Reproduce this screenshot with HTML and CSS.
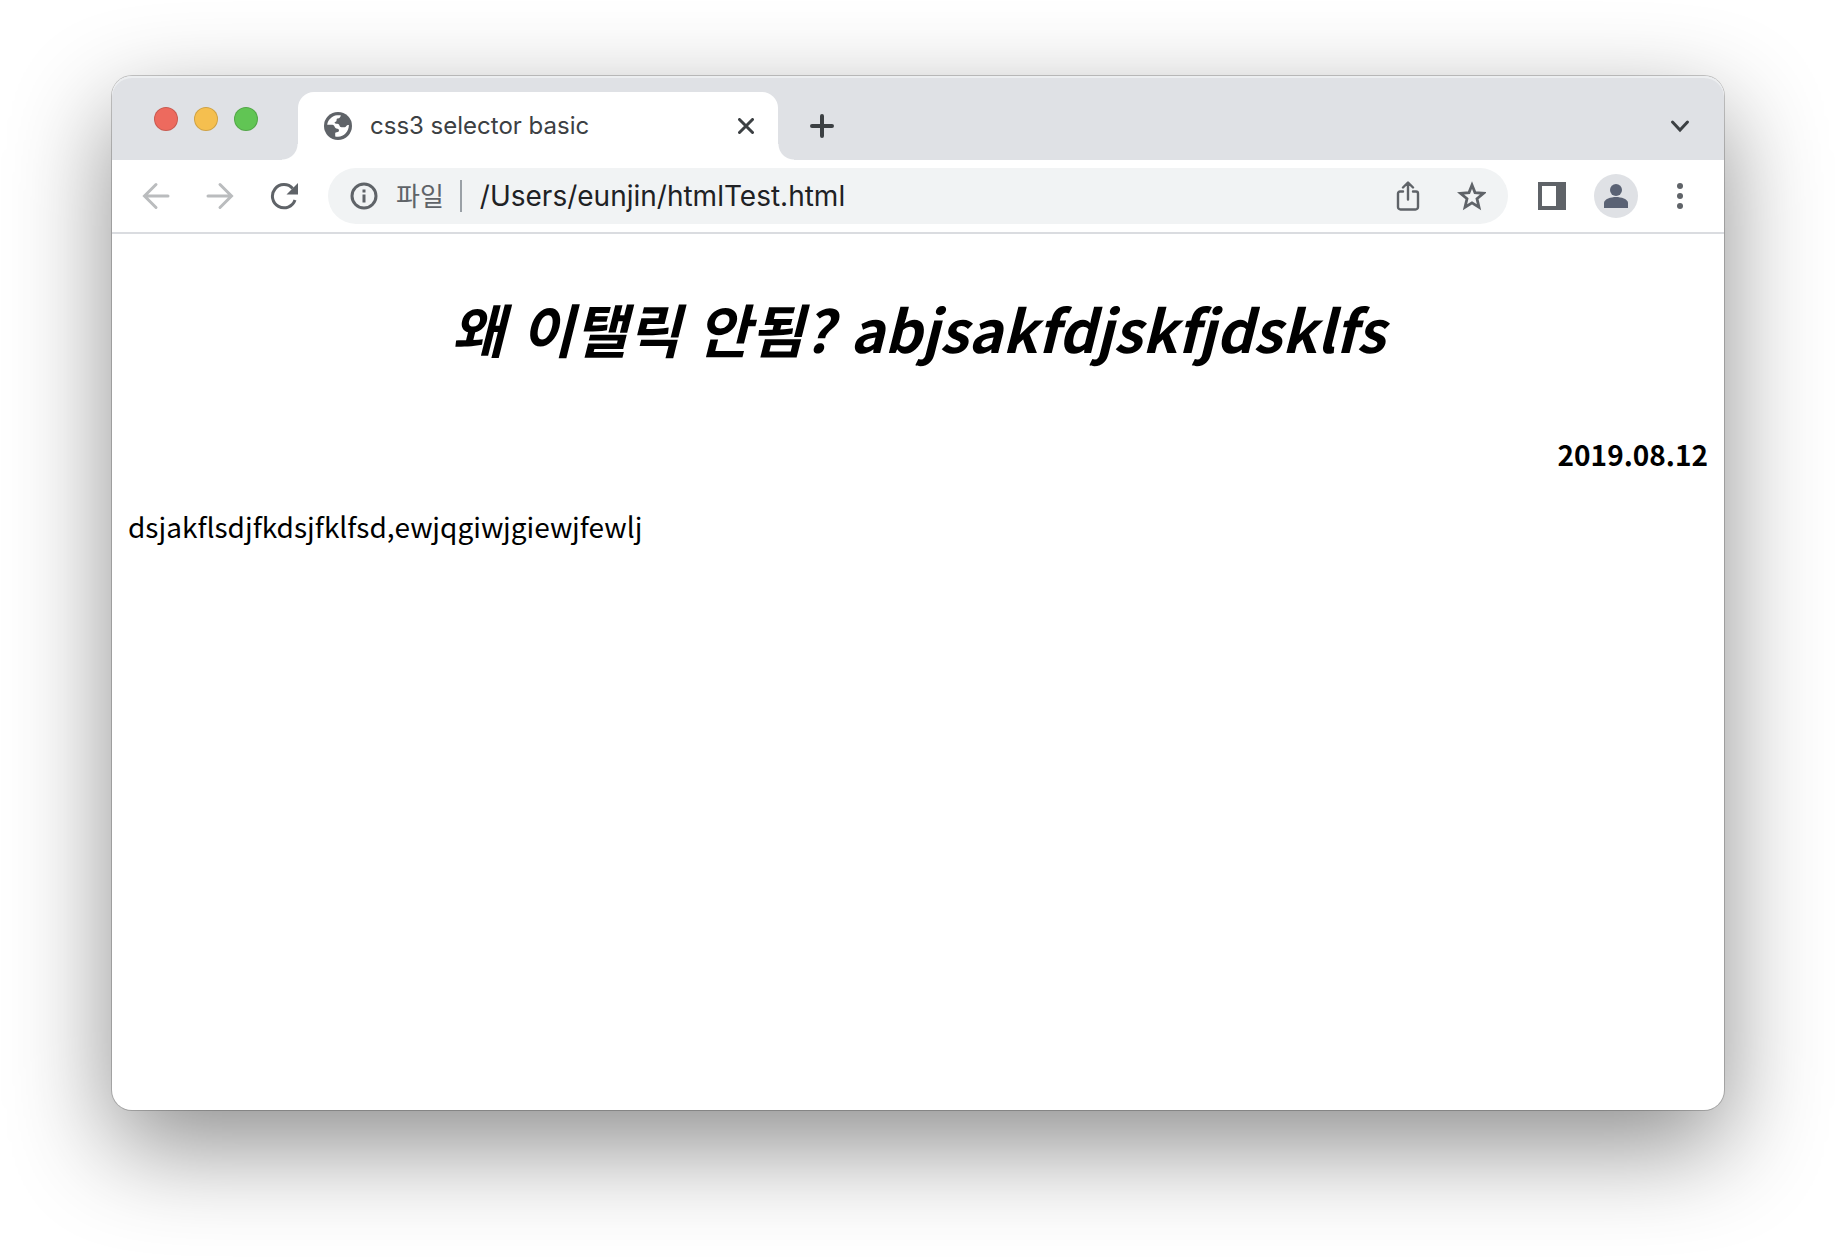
FILE: index.html
```html
<!DOCTYPE html>
<html lang="ko">
  <head>
    <meta charset="utf-8">
    <meta name="viewport" content="width=device-width, initial-scale=1">
    <title>css3 selector basic</title>
    <link rel="stylesheet" href="styles.css">
  </head>
  <body>
    <div class="window">

      <header class="tabstrip">
        <div class="lights">
          <button class="light light-close" aria-label="닫기"></button>
          <button class="light light-min" aria-label="최소화"></button>
          <button class="light light-max" aria-label="최대화"></button>
        </div>
        <div class="tab">
          <svg class="favicon" viewBox="0 0 28 28" width="28" height="28">
            <circle cx="14" cy="14" r="14" fill="#5f6368"/>
            <path fill="#fff" d="M3.200 12.800C3.800 8 8 3.800 13 3.300h3.800c-.2 1.700-1.200 3.200-3 3.300-.8 0-1.200.5-1.200 1.300 0 1.200-.6 1.800-1.600 2-.5.200-.4.900 0 1.300 1.100.8 3.200.2 4 1.300.6.8.6 2.300 1.700 2.600 1.700.5 4.500.2 5.300-.7.7-.8 1.500-1.300 2.900-1.300C24.900 19.500 20 24.800 14 24.800c-1 0-2-.1-2.800-.4v-3.300c.2-1.200 2.600-.4 3.500-1.600.8-1.200 0-2.600-1.300-2.700-1.700-.2-2.400-1-3-2.500-.5-1.200-1.700-1.500-3-1.500z"/>
          </svg>
          <span class="tab-title">css3 selector basic</span>
          <button class="icon-btn tab-close" aria-label="탭 닫기">
            <svg viewBox="0 0 16 16" width="16" height="16"><path class="line dark" d="M1.500 1.500l13 13M14.500 1.500l-13 13"/></svg>
          </button>
        </div>
        <button class="icon-btn new-tab" aria-label="새 탭">
          <svg viewBox="0 0 24 24" width="24" height="24"><path class="line dark thick" d="M12 2v20M2 12h20"/></svg>
        </button>
        <button class="icon-btn tab-search" aria-label="탭 검색">
          <svg viewBox="0 0 20 20" width="20" height="20"><path class="line dark" d="M2.500 6l7.500 8 7.500-8"/></svg>
        </button>
      </header>

      <nav class="toolbar">
        <button class="icon-btn" aria-label="뒤로">
          <svg viewBox="0 0 28 28" width="28" height="28"><path class="line faint" d="M26 14H3M14 2.500L2.500 14 14 25.500"/></svg>
        </button>
        <button class="icon-btn" aria-label="앞으로">
          <svg viewBox="0 0 28 28" width="28" height="28"><path class="line faint" d="M2 14h23M14 2.500L25.500 14 14 25.500"/></svg>
        </button>
        <button class="icon-btn" aria-label="새로고침">
          <svg viewBox="0 0 28 28" width="28" height="28">
            <path fill="none" stroke="#5f6368" stroke-width="3" d="M22.700 6.500A11.600 11.600 0 1 0 25 18"/>
            <path fill="#5f6368" d="M28 1v11.500H16.500z"/>
          </svg>
        </button>
        <div class="omnibox">
          <svg viewBox="0 0 28 28" width="28" height="28">
            <circle cx="14" cy="14" r="12" fill="none" stroke="#5f6368" stroke-width="3"/>
            <path fill="#5f6368" d="M12.500 7.500h3v3h-3zM12.500 12.500h3v8h-3z"/>
          </svg>
          <label class="scheme" for="url">파일</label>
          <input class="url" id="url" type="text" value="/Users/eunjin/htmlTest.html">
          <button class="icon-btn" aria-label="공유">
            <svg viewBox="0 0 28 30" width="28" height="30">
              <path fill="none" stroke="#5f6368" stroke-width="2.400" stroke-linecap="round" stroke-linejoin="round" d="M9 10.500H6a2 2 0 0 0-2 2V26a2.500 2.500 0 0 0 2.500 2.500h15A2.500 2.500 0 0 0 24 26V12.500a2 2 0 0 0-2-2h-3M14 18.500V2M9 6.500l5-5 5 5"/>
            </svg>
          </button>
          <button class="icon-btn" aria-label="북마크">
            <svg viewBox="0 0 30 30" width="30" height="30">
              <path fill="none" stroke="#5f6368" stroke-width="2.800" d="M16 4l3 7.600 8.500.700-6.500 5.500 2 8.400-7-4.400-7 4.400L11 17.800l-6.500-5.500L13 11.600z"/>
            </svg>
          </button>
        </div>
        <button class="icon-btn" aria-label="측면 패널">
          <svg viewBox="0 0 28 28" width="28" height="28"><path fill="#5f6368" fill-rule="evenodd" d="M0 0h28v28H0zM4 4v20h14V4z"/></svg>
        </button>
        <button class="icon-btn avatar" aria-label="프로필">
          <svg viewBox="0 0 24 24" width="24" height="24"><circle cx="12" cy="6" r="6" fill="#5a6274"/><path fill="#5a6274" d="M0 24v-5c0-4 7-6 12-6s12 2 12 6v5z"/></svg>
        </button>
        <button class="icon-btn" aria-label="메뉴">
          <svg viewBox="0 0 28 28" width="28" height="28" fill="#5f6368"><circle cx="14" cy="4" r="3"/><circle cx="14" cy="14" r="3"/><circle cx="14" cy="24" r="3"/></svg>
        </button>
      </nav>

      <main class="page">
        <h1 class="title">왜 이탤릭 안됨? abjsakfdjskfjdsklfs</h1>
        <p class="date">2019.08.12</p>
        <p class="text">dsjakflsdjfkdsjfklfsd,ewjqgiwjgiewjfewlj</p>
      </main>

    </div>
  </body>
</html>
```
FILE: styles.css
```css
* {
  box-sizing: border-box;
}

body {
  display: flex;
  min-height: 100vh;
  margin: 0;
  padding: 76px 112px 148px;
  background: #fff;
  font-family: "Noto Sans CJK KR", sans-serif;
}

.window {
  display: flex;
  flex: 1;
  flex-direction: column;
  min-width: 0;
  border-radius: 20px;
  background: #fff;
  box-shadow: 0 0 0 1px rgba(0, 0, 0, 0.2), 0 36px 100px rgba(0, 0, 0, 0.45);
}

/* tab strip */

.tabstrip {
  display: flex;
  align-items: center;
  height: 84px;
  padding: 16px 30px 0 42px;
  border-radius: 20px 20px 0 0;
  background: #dfe1e5;
  box-shadow: inset 0 2px 0 #eceef0;
}

.lights {
  display: flex;
  gap: 16px;
  margin: 0 40px 14px 0;
}

.light {
  width: 24px;
  height: 24px;
  padding: 0;
  border: 1px solid rgba(0, 0, 0, 0.15);
  border-radius: 50%;
}

.light-close {
  background: #ed6a5e;
}

.light-min {
  background: #f5bf4f;
}

.light-max {
  background: #61c554;
}

.tab {
  position: relative;
  display: flex;
  align-items: center;
  width: 480px;
  height: 68px;
  padding: 0 24px 0 26px;
  border-radius: 16px 16px 0 0;
  background: #fff;
}

/* curved feet of the active tab */
.tab::before,
.tab::after {
  content: "";
  position: absolute;
  bottom: 0;
  width: 16px;
  height: 16px;
}

.tab::before {
  right: 100%;
  background: radial-gradient(circle at 0 0, transparent 15px, #fff 16px);
}

.tab::after {
  left: 100%;
  background: radial-gradient(circle at 100% 0, transparent 15px, #fff 16px);
}

.tab-title {
  flex: 1;
  margin-left: 18px;
  color: #3c4043;
  font-family: Inter, sans-serif;
  font-size: 24px;
  line-height: 32px;
}

.icon-btn {
  display: flex;
  flex: none;
  align-items: center;
  justify-content: center;
  padding: 0;
  border: 0;
  background: none;
}

.tab-close {
  width: 16px;
}

.new-tab {
  width: 24px;
  margin-left: 32px;
}

.tab-search {
  width: 28px;
  margin-left: auto;
}

.line {
  fill: none;
  stroke-width: 3;
  stroke-linecap: round;
}

.thick {
  stroke-width: 4;
}

.dark {
  stroke: #3c4043;
}

.faint {
  stroke: #babcbe;
}

/* toolbar */

.toolbar {
  display: flex;
  align-items: center;
  gap: 36px;
  height: 74px;
  padding: 0 30px;
  border-bottom: 2px solid #dadce0;
}

.omnibox {
  display: flex;
  flex: 1;
  align-items: center;
  min-width: 0;
  height: 56px;
  margin: 0 -6px;
  padding: 0 22px;
  border-radius: 28px;
  background: #f1f3f4;
}

.omnibox .icon-btn {
  margin-left: 34px;
}

.scheme {
  height: 32px;
  margin-left: 18px;
  padding-right: 16px;
  border-right: 2px solid #9aa0a6;
  color: #5f6368;
  font-size: 26px;
  line-height: 30px;
}

.url {
  flex: 1;
  min-width: 0;
  margin-left: 18px;
  padding: 0;
  border: 0;
  outline: 0;
  background: none;
  color: #202124;
  font-family: Inter, sans-serif;
  font-size: 28px;
}

.avatar {
  width: 44px;
  height: 44px;
  margin: 0 -8px;
  border-radius: 50%;
  background: #dfe1e5;
}

/* page content */

.page {
  flex: 1;
  padding: 16px;
  color: #000;
  font-size: 28px;
}

.title {
  margin: 34px 0 58px;
  font-size: 58px;
  font-style: italic;
  line-height: 88px;
  text-align: center;
}

.date {
  margin: 0 0 24px;
  font-weight: bold;
  line-height: 48px;
  text-align: right;
}

.text {
  margin: 0;
  line-height: 48px;
}
```
